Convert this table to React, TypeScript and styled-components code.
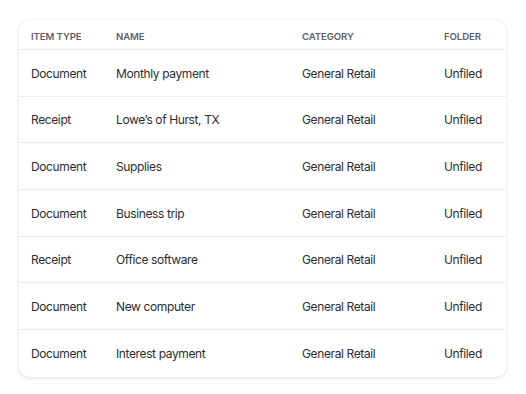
import React from "react";
import styled, { createGlobalStyle } from "styled-components";

const Global = createGlobalStyle`
  html, body { margin: 0; padding: 0; background: #ffffff; }
  body { font-family: Inter, "Noto Sans", sans-serif; }
`;

const Page = styled.div`
  width: 526px;
  height: 394px;
  box-sizing: border-box;
  padding: 20px 20px 0 19px;
`;

const Card = styled.div`
  background: #fff;
  border-radius: 10px;
  box-shadow: 0 1px 4px rgba(0, 0, 0, 0.12), 0 0 1px rgba(0, 0, 0, 0.1);
  overflow: hidden;
`;

const Grid = "85px 186px 142px 1fr";

const HeadRow = styled.div`
  display: grid;
  grid-template-columns: ${Grid};
  align-items: center;
  box-sizing: border-box;
  height: 30px;
  padding: 3px 0 0 12px;
  border-bottom: 1px solid #ececef;
  font-size: 9.6px;
  font-weight: 600;
  letter-spacing: -0.1px;
  color: #5f5e6e;
  text-transform: uppercase;
`;

const Row = styled.div<{ $last?: boolean }>`
  display: grid;
  grid-template-columns: ${Grid};
  align-items: center;
  height: 46.67px;
  padding-top: 1px;
  box-sizing: border-box;
  padding-left: 12px;
  border-bottom: ${(p) => (p.$last ? "none" : "1px solid #ececef")};
  font-size: 12px;
  letter-spacing: -0.38px;
  color: #2c2c34;
`;

const rows = [
  ["Document", "Monthly payment"],
  ["Receipt", "Lowe\u2019s of Hurst, TX"],
  ["Document", "Supplies"],
  ["Document", "Business trip"],
  ["Receipt", "Office software"],
  ["Document", "New computer"],
  ["Document", "Interest payment"],
];

export default function App() {
  return (
    <>
      <Global />
      <Page>
        <Card>
          <HeadRow>
            <span>Item type</span>
            <span>Name</span>
            <span>Category</span>
            <span>Folder</span>
          </HeadRow>
          {rows.map(([t, n], i) => (
            <Row key={i} $last={i === rows.length - 1}>
              <span>{t}</span>
              <span>{n}</span>
              <span>General Retail</span>
              <span>Unfiled</span>
            </Row>
          ))}
        </Card>
      </Page>
    </>
  );
}
